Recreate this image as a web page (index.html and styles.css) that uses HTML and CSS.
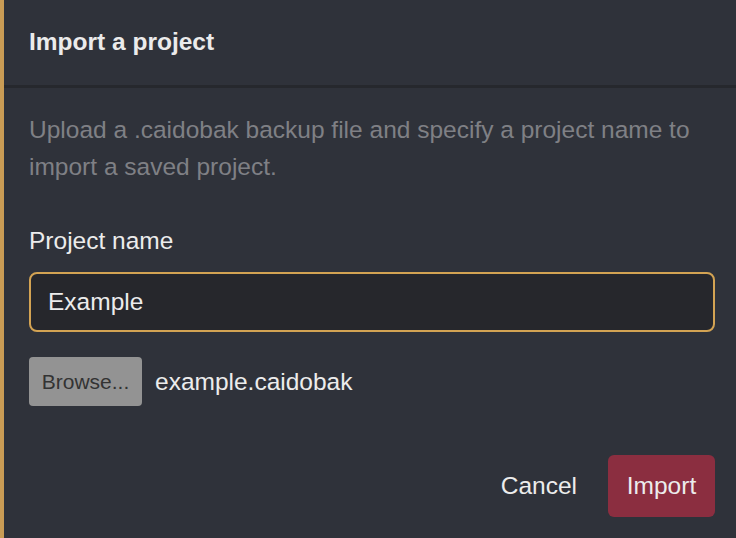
FILE: index.html
```html
<!DOCTYPE html>
<html>
<head>
<meta charset="utf-8">
<link rel="stylesheet" href="styles.css">
</head>
<body>
<div class="dialog">
  <div class="header"><h1 class="title">Import a project</h1></div>
  <div class="content">
    <p class="desc">Upload a .caidobak backup file and specify a project name to import a saved project.</p>
    <label class="label">Project name</label>
    <div class="input">Example</div>
    <div class="file-row">
      <span class="browse">Browse...</span>
      <span class="filename">example.caidobak</span>
    </div>
    <div class="actions">
      <span class="cancel">Cancel</span>
      <span class="import">Import</span>
    </div>
  </div>
</div>
</body>
</html>
```
FILE: styles.css
```css
html, body { margin: 0; padding: 0; background: #2f323a; }
body { font-family: "Liberation Sans", Arial, sans-serif; width: 736px; height: 538px; overflow: hidden; }
.dialog { border-left: 4px solid #c99c55; height: 538px; box-sizing: border-box; background: #2f323a; }
.header { height: 85px; border-bottom: 3px solid #26282d; padding-left: 25px; display: flex; align-items: center; }
.title { margin: 0; font-size: 24.5px; line-height: 28px; font-weight: bold; color: #ebebeb; margin-top: -2px; }
.content { padding: 0 21px 0 25px; display: flex; flex-direction: column; }
.desc { margin: 23px 0 0; font-size: 24.5px; line-height: 37px; color: #7f8085; }
.label { margin-top: 42px; font-size: 24.5px; color: #ececec; line-height: 28px; }
.input { margin-top: 17px; height: 56px; border: 2px solid #d3a353; border-radius: 8px; background: #26272c; color: #ececec; font-size: 24.5px; display: flex; align-items: center; padding-left: 17px; }
.file-row { margin-top: 25px; display: flex; align-items: center; gap: 13px; }
.browse { width: 113px; height: 49px; background: #939393; border-radius: 4px; color: #333; font-size: 21px; display: flex; align-items: center; justify-content: center; }
.filename { color: #ececec; font-size: 24.5px; }
.actions { margin-top: 49px; display: flex; justify-content: flex-end; align-items: center; gap: 31px; }
.cancel { color: #ececec; font-size: 24.5px; }
.import { width: 107px; height: 62px; background: #8b2e40; border-radius: 6px; color: #ececec; font-size: 24.5px; display: flex; align-items: center; justify-content: center; }
```
